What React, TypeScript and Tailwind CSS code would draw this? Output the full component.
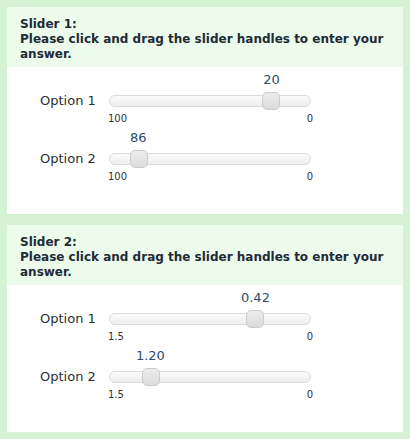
import React from 'react';

type Opt = { label: string; value: number; shown: string };
type Q = { title: string; min: number; max: number; minLabel: string; maxLabel: string; options: Opt[] };

const QUESTIONS: Q[] = [
  {
    title: 'Slider 1:',
    min: 0,
    max: 100,
    minLabel: '0',
    maxLabel: '100',
    options: [
      { label: 'Option 1', value: 20, shown: '20' },
      { label: 'Option 2', value: 86, shown: '86' },
    ],
  },
  {
    title: 'Slider 2:',
    min: 0,
    max: 1.5,
    minLabel: '0',
    maxLabel: '1.5',
    options: [
      { label: 'Option 1', value: 0.42, shown: '0.42' },
      { label: 'Option 2', value: 1.2, shown: '1.20' },
    ],
  },
];

// scale runs from max on the left to min on the right
const SliderRow = ({ q, opt }: { q: Q; opt: Opt }) => {
  const f = (q.max - opt.value) / (q.max - q.min);
  const left = `calc(${f * 100}% + 1px)`;
  return (
    <div className="mb-[5px]">
      <div className="ml-[102px] w-[202px] relative h-4 leading-4 text-[13px] text-[#2d4c6c]">
        <span className="absolute top-0 -translate-x-1/2 whitespace-nowrap" style={{ left }}>
          {opt.shown}
        </span>
      </div>
      <div className="flex items-center mt-[5px]">
        <div className="w-[102px] pl-[33px] text-[13px] leading-4 text-[#2b2f33]">{opt.label}</div>
        <div className="relative w-[202px] h-3 rounded-full border border-[#dcdcdc] bg-gradient-to-b from-[#fbfbfb] to-[#eeeeee]">
          <div
            className="absolute top-[-4px] w-[18px] h-[18px] -translate-x-1/2 rounded-[5px] border border-[#cccccc] bg-gradient-to-b from-[#ececec] to-[#dcdcdc]"
            style={{ left }}
          />
        </div>
      </div>
      <div className="ml-[101px] w-[205px] mt-[4px] flex justify-between text-[10px] leading-3 text-[#333]">
        <span>{q.maxLabel}</span>
        <span>{q.minLabel}</span>
      </div>
    </div>
  );
};

const Panel = ({ q }: { q: Q }) => (
  <div className="bg-white h-[207px]">
    <div className="bg-[#ecfbec] h-[60px] px-[13px] pt-[10px] text-[12px] leading-[15px] font-bold text-[#1e2b38]">
      <div>{q.title}</div>
      <div>Please click and drag the slider handles to enter your answer.</div>
    </div>
    <div className="pt-[5px]">
      {q.options.map((o) => (
        <SliderRow key={o.label} q={q} opt={o} />
      ))}
    </div>
  </div>
);

export default function App() {
  return (
    <div className="w-[410px] h-[439px] bg-[#d5f2d5] p-[7px] flex flex-col gap-[11px] font-['DejaVu_Sans',sans-serif]">
      {QUESTIONS.map((q) => (
        <Panel key={q.title} q={q} />
      ))}
    </div>
  );
}
